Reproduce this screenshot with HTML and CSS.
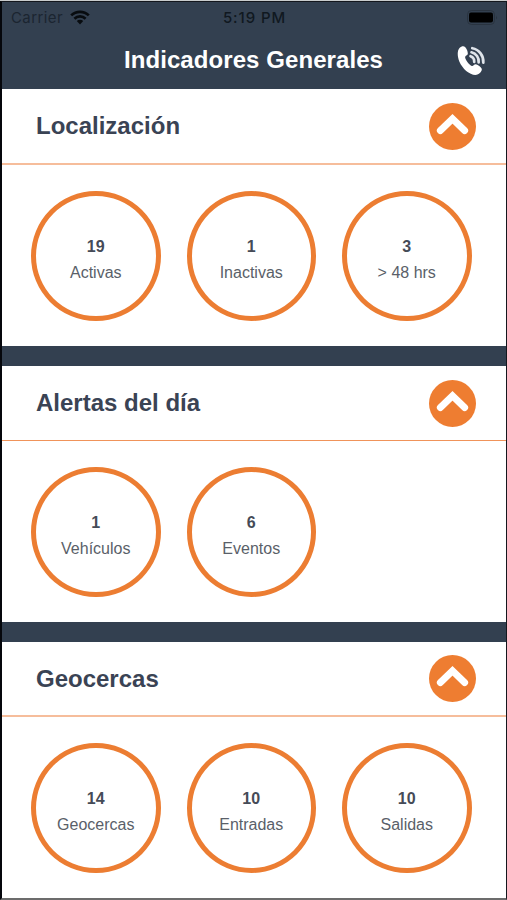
FILE: index.html
```
<!DOCTYPE html>
<html lang="es">
<head>
  <meta charset="UTF-8" />
  <meta name="viewport" content="width=device-width, initial-scale=1.0" />
  <title>Indicadores Generales</title>
  <link rel="stylesheet" href="styles.css">
</head>
<body>
  <div class="screen">

    <!-- Header -->
    <header class="header">
      <div class="status-bar">
        <div class="carrier">
          <span>Carrier</span>
          <svg class="wifi" viewBox="0 0 20 15">
            <path d="M1.2 5.4a12.6 12.6 0 0 1 17.6 0M4.4 8.7a8 8 0 0 1 11.2 0" fill="none" stroke="currentColor" stroke-width="2.7" />
            <path d="M10 14.4l3.2-3.3a4.6 4.6 0 0 0-6.4 0z" fill="currentColor" />
          </svg>
        </div>
        <span class="time">5:19 PM</span>
        <div class="battery-wrap">
          <svg class="battery" viewBox="0 0 31 15">
            <rect x="0.5" y="0.5" width="27" height="14" rx="4" fill="none" stroke="#29333f" />
            <rect x="2" y="2.5" width="24" height="10" rx="2" fill="#000" />
            <path d="M29 5.5q1.8 2 0 4z" fill="#29333f" />
          </svg>
        </div>
      </div>
      <div class="nav-bar">
        <h1 class="title">Indicadores Generales</h1>
        <svg class="phone" viewBox="0 0 30 32">
          <path d="M2.6 3C4.6 1.200 7 .8 8.600 2.200C10.200 4 11.200 6.400 11.200 8.800C11.200 10.800 8.400 11 8.400 12.600C8.800 15.600 12 20 15.200 21.600C17 22.200 17.600 19.800 19.600 20C22 20.600 24.400 22.600 25.600 24.600C26.200 26.600 23.600 30 20.600 30.800C14 32 5.800 25 2.400 17C.4 11.400 0 6 2.600 3Z" fill="#fff" />
          <path d="M14 11.600A5.800 5.800 0 0 1 17.800 17.400M15 7.500A9.600 9.600 0 0 1 22.400 18M15.800 3.300A14 14 0 0 1 27.200 18.300" fill="none" stroke="#dfe4ea" stroke-width="2.800" stroke-linecap="round" />
        </svg>
      </div>
    </header>

    <!-- Localización -->
    <section class="card">
      <div class="card-header">
        <h2>Localización</h2>
        <svg class="toggle" viewBox="0 0 47 47">
          <circle cx="23.5" cy="23.5" r="23.5" fill="#ee7d31" />
          <path d="M11.4 27.6L23.5 15.8L35.6 27.6" fill="none" stroke="#fff" stroke-width="7" stroke-linecap="round" />
        </svg>
      </div>
      <div class="indicators">
        <div class="indicator"><strong>19</strong><span>Activas</span></div>
        <div class="indicator"><strong>1</strong><span>Inactivas</span></div>
        <div class="indicator"><strong>3</strong><span>&gt; 48 hrs</span></div>
      </div>
    </section>

    <!-- Alertas -->
    <section class="card alerts">
      <div class="card-header">
        <h2>Alertas del día</h2>
        <svg class="toggle" viewBox="0 0 47 47">
          <circle cx="23.5" cy="23.5" r="23.5" fill="#ee7d31" />
          <path d="M11.4 27.6L23.5 15.8L35.6 27.6" fill="none" stroke="#fff" stroke-width="7" stroke-linecap="round" />
        </svg>
      </div>
      <div class="indicators">
        <div class="indicator"><strong>1</strong><span>Vehículos</span></div>
        <div class="indicator"><strong>6</strong><span>Eventos</span></div>
      </div>
    </section>

    <!-- Geocercas -->
    <section class="card">
      <div class="card-header">
        <h2>Geocercas</h2>
        <svg class="toggle" viewBox="0 0 47 47">
          <circle cx="23.5" cy="23.5" r="23.5" fill="#ee7d31" />
          <path d="M11.4 27.6L23.5 15.8L35.6 27.6" fill="none" stroke="#fff" stroke-width="7" stroke-linecap="round" />
        </svg>
      </div>
      <div class="indicators">
        <div class="indicator"><strong>14</strong><span>Geocercas</span></div>
        <div class="indicator"><strong>10</strong><span>Entradas</span></div>
        <div class="indicator"><strong>10</strong><span>Salidas</span></div>
      </div>
    </section>

  </div>
</body>
</html>
```

FILE: styles.css
```
* { box-sizing: border-box; }

body {
  margin: 0;
  font-family: "Liberation Sans", Arial, sans-serif;
  background: #c9cccd;
  padding-top: 1px;
  overflow: hidden;
}

.screen {
  display: flex;
  flex-direction: column;
  gap: 20px;
  height: 899px;
  border: solid #14171d;
  border-width: 1px 1px 2px 2px;
  border-left-color: #05070c;
  border-bottom-color: #6c6c6c;
  background: #334050;
}

.header {
  height: 87px;
  margin-bottom: -20px;
  color: #fff;
}

/* status bar */
.status-bar {
  display: grid;
  grid-template-columns: 1fr auto 1fr;
  align-items: center;
  height: 31px;
  padding: 0 8px 0 9px;
  font-family: Inter, sans-serif;
  font-size: 15px;
  color: #101820;
}

.carrier {
  display: flex;
  align-items: center;
  gap: 7px;
  letter-spacing: 0.4px;
  color: #1b2530;
}

.wifi {
  width: 20px;
  height: 15px;
  color: #080c10;
}

.time {
  font-weight: 500;
  letter-spacing: 0.9px;
}

.battery-wrap {
  display: flex;
  justify-content: flex-end;
}

.battery {
  width: 31px;
  height: 15px;
}

/* title row */
.nav-bar {
  display: grid;
  grid-template-columns: 1fr auto 1fr;
  align-items: center;
  height: 54px;
  padding-right: 20px;
}

.title {
  grid-column: 2;
  margin: 0 0 0 19px;
  font-size: 24px;
  line-height: 28px;
  letter-spacing: 0.08px;
}

.phone {
  justify-self: end;
  width: 29px;
  height: 31px;
}

/* cards */
.card {
  height: 256px;
  background: #fff;
}

.header + .card {
  height: 257px;
}

.card-header {
  display: flex;
  align-items: center;
  justify-content: space-between;
  height: 76px;
  padding: 0 30px 0 34px;
  border-bottom: 2px solid #f6bd9b;
}

.card + .card .card-header {
  height: 75px;
}

.alerts .card-header {
  border-bottom: 1px solid #f0935a;
}

.card-header h2 {
  margin: 0;
  font-size: 24px;
  line-height: 28px;
  color: #3a4354;
}

.toggle {
  width: 47px;
  height: 47px;
}

.indicators {
  display: flex;
  gap: 26px;
  padding: 26px 29px;
}

.indicator {
  display: flex;
  flex-direction: column;
  align-items: center;
  justify-content: center;
  width: 129.5px;
  height: 130px;
  padding-top: 7px;
  border: 5px solid #ec7d32;
  border-radius: 50%;
  font-size: 16px;
  line-height: 26px;
  color: #5a5f69;
}

.indicator strong {
  color: #454b57;
}
```
